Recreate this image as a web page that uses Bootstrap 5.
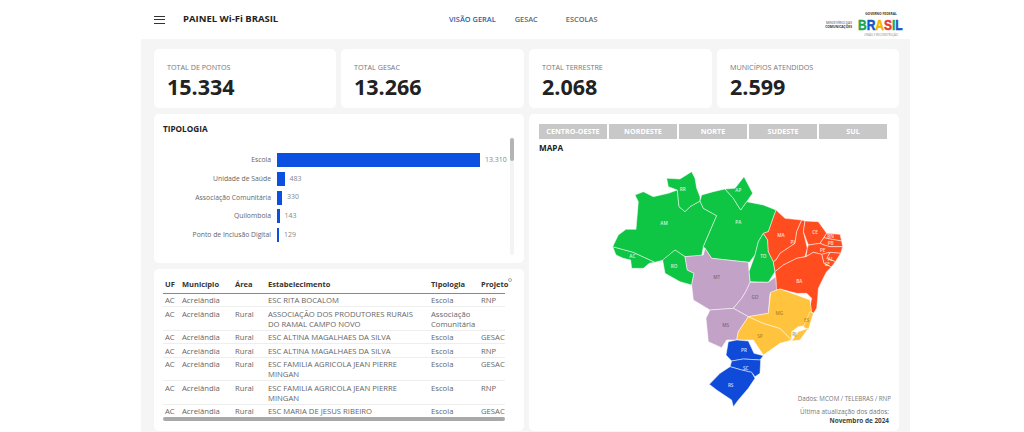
<!DOCTYPE html>
<html lang="pt-BR">
<head>
  <meta charset="UTF-8">
  <meta name="viewport" content="width=device-width, initial-scale=1.0">
  <title>Painel Wi-Fi Brasil</title>
  <link href="https://cdn.jsdelivr.net/npm/bootstrap@5.3.2/dist/css/bootstrap.min.css" rel="stylesheet">
  <style>
    html, body { height: 432px; overflow: hidden; }
    body { background: #fff; font-family: "Open Sans", sans-serif; color: #222; }
    .page-shell { width: 769px; margin-left: 141px; height: 432px; display: flex; flex-direction: column; background: #f5f5f5; }
    .top-bar { height: 39px; background: #fff; padding: 0 5px 0 13px; }
    .burger { width: 11px; height: 8px; border-top: 1px solid #333; border-bottom: 1px solid #333; position: relative; }
    .burger::after { content: ""; position: absolute; left: 0; right: 0; top: 2.5px; border-top: 1px solid #333; }
    .app-title { margin-left: 18px; width: 266px; font-size: 9.5px; font-weight: 700; color: #222; white-space: nowrap; }
    .top-link { font-size: 7.4px; font-weight: 600; color: #666; white-space: nowrap; }
    .top-link.on { color: #2b5ca8; margin-right: 19px; }
    .top-link.wide { margin-right: 28px; }
    .logo-zone { margin-left: auto; }
    .content-area { padding: 10px 11px 0 13px; display: grid; grid-template-columns: 182px 183px 183px 182px; grid-template-rows: 59px 149px 162px; gap: 6px 5px; }
    .white-box { background: #fff; border-radius: 5px; }
    .kpi-box { padding: 13px 13px 0; }
    .kpi-label { font-size: 7.2px; color: #777; line-height: 10px; white-space: nowrap; }
    .kpi-num { font-size: 21.5px; font-weight: 700; line-height: 26px; color: #222; margin-top: 2px; }
    .tipo-box { grid-column: 1 / 3; position: relative; padding: 9px 9px; }
    .box-title { font-size: 8.2px; font-weight: 700; line-height: 11px; color: #222; }
    .chart-rows { margin-top: 17px; }
    .chart-row { height: 18.7px; display: flex; align-items: center; font-size: 6.8px; color: #666; }
    .chart-name { width: 108px; text-align: right; white-space: nowrap; margin-right: 6px; }
    .chart-bar { height: 14px; background: #0b50e0; margin-right: 5px; }
    .chart-val { color: #888; font-size: 7px; }
    .scroll-track { position: absolute; left: 356px; top: 24px; width: 4px; height: 117px; background: #f3f3f3; border-radius: 2px; }
    .scroll-thumb { height: 23px; background: #b4b4b4; border-radius: 2px; }
    .table-box { grid-column: 1 / 3; padding: 8px 9px 0; position: relative; overflow: hidden; }
    .data-table { font-size: 7.7px; line-height: 10px; width: 342px; table-layout: fixed; margin-bottom: 0; color: #666; }
    .data-table th { font-weight: 700; color: #333; padding: 2px 2px 3.5px; border-bottom: 1px solid #888; font-size: 7.5px; }
    .data-table td { padding: 1.5px 2px 1px; border-bottom: 1px solid #eee; color: #666; }
    .data-table td.estab-cell { padding-right: 10px; }
    .hbar { width: 342px; height: 4px; background: #a9a9a9; border-radius: 2px; margin-top: -1px; position: relative; }
    .sort-dot { position: absolute; left: 354px; top: 9px; width: 4px; height: 4px; border: 1px solid #aaa; border-radius: 50%; }
    .map-box { grid-column: 3 / 5; grid-row: 2 / 4; padding: 10px 12px 0 10px; position: relative; overflow: hidden; }
    .region-row { gap: 2px; }
    .region-btn { flex: 1 1 0; background: #c8c8c8; border: 0; border-radius: 0; color: #fff; font-size: 7.2px; font-weight: 700; height: 15px; padding: 0; line-height: 15px; }
    .map-title { font-size: 8.2px; font-weight: 700; margin-top: 3px; line-height: 11px; color: #222; }
    .map-svg { position: absolute; left: 0; top: 41px; width: 370px; height: 276px; }
    .map-note { position: absolute; right: 10px; bottom: 6px; text-align: right; font-size: 6.4px; line-height: 8.5px; color: #777; }
    .map-note .src { font-size: 6.2px; margin: 0 -2px 4.5px 0; }
    .map-note b { color: #444; }
    .st { stroke: rgba(255,255,255,.75); stroke-width: 2; stroke-linejoin: round; }
    .uf { font: 600 14px "Open Sans", sans-serif; fill: #fff; text-anchor: middle; opacity: .8; }
    .uf.dk { fill: #6d5a70; }
    .uf.yl { fill: #9a7a20; }
  </style>
</head>
<body>
  <div class="page-shell">
    <!-- Header -->
    <div class="top-bar d-flex align-items-center">
      <div class="burger"></div>
      <div class="app-title">PAINEL Wi-Fi BRASIL</div>
      <div class="top-link on">VISÃO GERAL</div>
      <div class="top-link wide">GESAC</div>
      <div class="top-link">ESCOLAS</div>
      <div class="logo-zone">
        <svg class="d-block" width="92" height="34" viewBox="0 0 92 34">
          <text x="39" y="20.5" font-family="Open Sans" font-size="3.3" font-weight="600" fill="#777" text-anchor="end">MINISTÉRIO DAS</text>
          <text x="39" y="24.5" font-family="Open Sans" font-size="3.3" font-weight="700" fill="#333" text-anchor="end">COMUNICAÇÕES</text>
          <text x="68" y="12" font-family="Open Sans" font-size="3.3" font-weight="700" fill="#333" text-anchor="middle">GOVERNO FEDERAL</text>
          <text transform="translate(45 26.5) scale(.8 1)" font-family="Liberation Sans" font-size="15" font-weight="700" stroke-width=".5"><tspan fill="#1aa64a" stroke="#1aa64a">B</tspan><tspan fill="#1456c8" stroke="#1456c8">R</tspan><tspan fill="#f5b400" stroke="#f5b400">A</tspan><tspan fill="#e53b2e" stroke="#e53b2e">S</tspan><tspan fill="#1aa64a" stroke="#1aa64a">I</tspan><tspan fill="#1456c8" stroke="#1456c8">L</tspan></text>
          <text x="68" y="33" font-family="Open Sans" font-size="2.8" fill="#888" text-anchor="middle">UNIÃO E RECONSTRUÇÃO</text>
        </svg>
      </div>
    </div>

    <div class="content-area">
      <!-- KPIs -->
      <div class="white-box kpi-box"><div class="kpi-label">TOTAL DE PONTOS</div><div class="kpi-num">15.334</div></div>
      <div class="white-box kpi-box"><div class="kpi-label">TOTAL GESAC</div><div class="kpi-num">13.266</div></div>
      <div class="white-box kpi-box"><div class="kpi-label">TOTAL TERRESTRE</div><div class="kpi-num">2.068</div></div>
      <div class="white-box kpi-box"><div class="kpi-label">MUNICÍPIOS ATENDIDOS</div><div class="kpi-num">2.599</div></div>

      <!-- Tipologia -->
      <div class="white-box tipo-box">
        <div class="box-title">TIPOLOGIA</div>
        <div class="chart-rows">
          <div class="chart-row"><div class="chart-name">Escola</div><div class="chart-bar" style="width:203px"></div><div class="chart-val">13.310</div></div>
          <div class="chart-row"><div class="chart-name">Unidade de Saúde</div><div class="chart-bar" style="width:7.5px"></div><div class="chart-val">483</div></div>
          <div class="chart-row"><div class="chart-name">Associação Comunitária</div><div class="chart-bar" style="width:5px"></div><div class="chart-val">330</div></div>
          <div class="chart-row"><div class="chart-name">Quilombola</div><div class="chart-bar" style="width:2.5px"></div><div class="chart-val">143</div></div>
          <div class="chart-row"><div class="chart-name">Ponto de Inclusão Digital</div><div class="chart-bar" style="width:2px"></div><div class="chart-val">129</div></div>
        </div>
        <div class="scroll-track"><div class="scroll-thumb"></div></div>
      </div>

      <!-- Mapa -->
      <div class="white-box map-box">
        <div class="d-flex region-row">
          <button class="btn region-btn">CENTRO-OESTE</button>
          <button class="btn region-btn">NORDESTE</button>
          <button class="btn region-btn">NORTE</button>
          <button class="btn region-btn">SUDESTE</button>
          <button class="btn region-btn">SUL</button>
        </div>
        <div class="map-title">MAPA</div>
        <svg class="map-svg" viewBox="-213 -30 1110 828">
          <g fill="#0fc544" class="st">
            <polygon points="38,245 100,262 165,292 148,295 130,310 95,310 92,285 70,280 48,270"/>
            <polygon points="38,245 55,210 78,193 108,193 115,110 105,90 130,80 160,95 205,85 232,75 237,125 255,140 270,125 300,108 310,130 350,152 310,245 305,272 255,275 225,255 190,285 165,292 100,262"/>
            <polygon points="200,40 240,42 275,20 285,40 290,70 300,95 300,108 270,125 255,140 237,125 232,75 205,65"/>
            <polygon points="225,255 255,275 262,315 282,325 275,360 240,350 195,325 188,285"/>
            <polygon points="300,108 305,90 340,80 375,72 400,100 422,135 440,110 490,120 528,135 505,200 490,205 475,230 465,270 448,292 335,280 315,250 310,245 350,152 310,130"/>
            <polygon points="375,72 405,70 432,35 445,60 458,85 440,110 422,135 400,100"/>
            <polygon points="490,205 503,225 505,260 520,290 525,320 505,352 450,350 447,320 465,270 475,230"/>
          </g>
          <g fill="#ff4d1f" class="st">
            <polygon points="528,135 555,160 605,165 590,200 585,235 540,265 528,285 520,290 505,260 503,225 490,205 505,200"/>
            <polygon points="605,165 615,168 610,200 622,250 615,275 590,280 550,300 525,320 520,290 528,285 540,265 585,235 590,200"/>
            <polygon points="615,168 655,170 680,205 660,235 625,240 610,200"/>
            <polygon points="680,205 720,208 725,228 690,222 672,218"/>
            <polygon points="660,235 672,218 690,222 725,228 728,245 690,245 672,240"/>
            <polygon points="622,250 625,240 660,235 672,240 690,245 728,245 722,265 690,262 665,268 640,262 618,275"/>
            <polygon points="690,262 722,265 706,290 680,280"/>
            <polygon points="665,268 690,262 680,280 706,290 694,306 672,296"/>
            <polygon points="525,320 550,300 590,280 618,275 640,262 665,268 672,296 694,306 680,320 672,335 655,370 653,400 650,430 640,445 628,435 635,400 620,385 590,385 540,372 512,382 528,360 527,335"/>
          </g>
          <g fill="#c2a3c7" class="st">
            <polygon points="255,275 310,270 315,250 335,280 445,292 447,320 450,352 440,375 425,400 400,430 330,435 280,405 275,360 282,325 262,315"/>
            <polygon points="450,352 505,352 527,335 530,375 510,385 505,445 445,455 400,430 425,400 440,375"/>
            <polygon points="330,435 400,430 445,455 415,500 410,525 380,525 365,548 325,530 318,460"/>
          </g>
          <g fill="#ffc33d" class="st">
            <polygon points="415,500 445,455 490,475 540,490 575,525 540,535 490,570 460,525 410,525"/>
            <polygon points="512,382 540,372 590,390 630,405 635,440 640,445 625,480 595,485 575,500 575,525 540,490 490,475 445,455 505,445"/>
            <polygon points="630,440 640,445 625,495 610,485"/>
            <polygon points="595,500 625,490 600,525 575,528"/>
          </g>
          <g fill="#0f4bd8" class="st">
            <polygon points="385,530 410,525 445,528 462,565 490,572 480,585 430,582 395,588 378,570"/>
            <polygon points="395,588 430,582 482,585 480,625 465,635 455,622 425,615 390,605"/>
            <polygon points="390,605 425,615 455,622 465,640 445,670 415,705 400,725 395,705 350,675 328,658 360,625"/>
          </g>
          <text class="uf" x="192" y="180">AM</text>
          <text class="uf" x="248" y="77">RR</text>
          <text class="uf" x="415" y="80">AP</text>
          <text class="uf" x="415" y="177">PA</text>
          <text class="uf" x="97" y="280">AC</text>
          <text class="uf" x="222" y="308">RO</text>
          <text class="uf" x="490" y="280">TO</text>
          <text class="uf" x="543" y="217">MA</text>
          <text class="uf" x="578" y="237">PI</text>
          <text class="uf" x="645" y="208">CE</text>
          <text class="uf" x="692" y="218">RN</text>
          <text class="uf" x="692" y="241">PB</text>
          <text class="uf" x="668" y="262">PE</text>
          <text class="uf" x="692" y="288">AL</text>
          <text class="uf" x="682" y="302">SE</text>
          <text class="uf" x="598" y="355">BA</text>
          <text class="uf dk" x="350" y="343">MT</text>
          <text class="uf dk" x="465" y="403">GO</text>
          <text class="uf dk" x="377" y="487">MS</text>
          <text class="uf yl" x="538" y="450">MG</text>
          <text class="uf yl" x="620" y="470">ES</text>
          <text class="uf yl" x="480" y="520">SP</text>
          <text class="uf yl" x="583" y="513">RJ</text>
          <text class="uf" x="432" y="560">PR</text>
          <text class="uf" x="437" y="615">SC</text>
          <text class="uf" x="392" y="665">RS</text>
        </svg>
        <div class="map-note">
          <div class="src">Dados: MCOM / TELEBRAS / RNP</div>
          <div>Última atualização dos dados:</div>
          <b>Novembro de 2024</b>
        </div>
      </div>

      <!-- Tabela -->
      <div class="white-box table-box">
        <table class="table data-table">
          <colgroup><col style="width:17px"><col style="width:53px"><col style="width:33px"><col style="width:163px"><col style="width:50px"><col style="width:26px"></colgroup>
          <thead><tr><th>UF</th><th>Município</th><th>Área</th><th>Estabelecimento</th><th>Tipologia</th><th>Projeto</th></tr></thead>
          <tbody>
            <tr><td>AC</td><td>Acrelândia</td><td></td><td class="estab-cell">ESC RITA BOCALOM</td><td>Escola</td><td>RNP</td></tr>
            <tr><td>AC</td><td>Acrelândia</td><td>Rural</td><td class="estab-cell">ASSOCIAÇÃO DOS PRODUTORES RURAIS DO RAMAL CAMPO NOVO</td><td>Associação Comunitária</td><td></td></tr>
            <tr><td>AC</td><td>Acrelândia</td><td>Rural</td><td class="estab-cell">ESC ALTINA MAGALHAES DA SILVA</td><td>Escola</td><td>GESAC</td></tr>
            <tr><td>AC</td><td>Acrelândia</td><td>Rural</td><td class="estab-cell">ESC ALTINA MAGALHAES DA SILVA</td><td>Escola</td><td>RNP</td></tr>
            <tr><td>AC</td><td>Acrelândia</td><td>Rural</td><td class="estab-cell">ESC FAMILIA AGRICOLA JEAN PIERRE MINGAN</td><td>Escola</td><td>GESAC</td></tr>
            <tr><td>AC</td><td>Acrelândia</td><td>Rural</td><td class="estab-cell">ESC FAMILIA AGRICOLA JEAN PIERRE MINGAN</td><td>Escola</td><td>RNP</td></tr>
            <tr><td>AC</td><td>Acrelândia</td><td>Rural</td><td class="estab-cell">ESC MARIA DE JESUS RIBEIRO</td><td>Escola</td><td>GESAC</td></tr>
          </tbody>
        </table>
        <div class="hbar"></div>
        <div class="sort-dot"></div>
      </div>
    </div>
  </div>
  <script src="https://cdn.jsdelivr.net/npm/bootstrap@5.3.2/dist/js/bootstrap.bundle.min.js"></script>
</body>
</html>
